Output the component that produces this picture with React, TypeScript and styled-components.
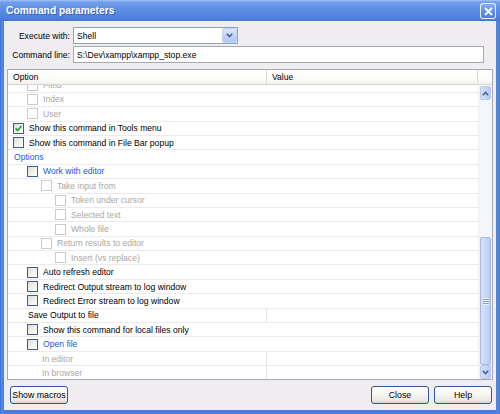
import styled, { createGlobalStyle } from "styled-components";

const GlobalStyle = createGlobalStyle`
  html, body {
    margin: 0;
    padding: 0;
    background: #ffffff;
  }
  * {
    box-sizing: border-box;
  }
`;

const FONT = `"Liberation Sans", Arial, sans-serif`;

const Window = styled.div`
  width: 500px;
  height: 414px;
  display: flex;
  flex-direction: column;
  background: linear-gradient(90deg, #3b6fd6 0, #5a8ae2 2px, #4a7cdb 4px, #4a7cdb 496px, #5a8ae2 498px, #3b6fd6 100%);
  padding: 0 4px 4px 4px;
  font-family: ${FONT};
  font-size: 8.6px;
  color: #000;
  overflow: hidden;
`;

const TitleBar = styled.div`
  height: 21px;
  margin: 0 -4px;
  padding: 0 4px 0 6px;
  display: flex;
  align-items: center;
  justify-content: space-between;
  background: linear-gradient(180deg, #a3c2f6 0, #74a0ea 2px, #5f8fe3 8px, #5283de 16px, #4577d8 21px);
`;

const TitleText = styled.span`
  color: #ffffff;
  font-weight: bold;
  font-size: 10.2px;
  letter-spacing: 0.05px;
  text-shadow: 1px 1px 0 rgba(20, 50, 130, 0.45);
`;

const CloseButton = styled.div`
  width: 16px;
  height: 16px;
  margin-top: 1px;
  border: 1px solid rgba(255, 255, 255, 0.85);
  border-radius: 3px;
  background: linear-gradient(180deg, #89aef0 0, #5d8ce4 60%, #4c7ddc 100%);
  display: flex;
  align-items: center;
  justify-content: center;
`;

const Body = styled.div`
  flex: 1;
  background: #efedf0;
  display: flex;
  flex-direction: column;
  padding: 6px 3px 6px 3px;
`;

const FormRow = styled.div`
  display: flex;
  align-items: center;
  gap: 3px;
  margin-bottom: 2px;
`;

const FormLabel = styled.label`
  width: 63px;
  text-align: right;
  white-space: nowrap;
`;

const Combo = styled.div`
  width: 165px;
  height: 17px;
  background: #ffffff;
  border: 1px solid #8aa2bd;
  display: flex;
  align-items: center;
  justify-content: space-between;
  padding-left: 3px;
`;

const ComboButton = styled.div`
  width: 15px;
  height: 15px;
  border: 1px solid #c6d4f3;
  border-radius: 2px;
  background: linear-gradient(180deg, #dce7fd 0, #c3d4fb 50%, #b2c7f4 100%);
  display: flex;
  align-items: center;
  justify-content: center;
`;

const TextBox = styled.div`
  width: 411px;
  height: 17px;
  background: #ffffff;
  border: 1px solid #a4a9b0;
  display: flex;
  align-items: center;
  padding-left: 3px;
`;

const Grid = styled.div`
  margin-top: 4px;
  height: 311px;
  border: 1px solid #a7abb0;
  background: #ffffff;
  display: flex;
  flex-direction: column;
`;

const Header = styled.div`
  height: 15px;
  display: flex;
  background: linear-gradient(180deg, #ffffff 0, #fbfbfa 70%, #f1f0ec 100%);
  border-bottom: 1px solid #d9d7cf;
`;

const HeaderCell = styled.div<{ $width?: number }>`
  ${({ $width }) => ($width ? `width: ${$width}px;` : "flex: 1;")}
  display: flex;
  align-items: center;
  padding-left: 5px;
  border-right: 1px solid #dedcd3;
`;

const HeaderFill = styled.div`
  width: 14px;
`;

const ListArea = styled.div`
  flex: 1;
  display: flex;
  min-height: 0;
`;

const Viewport = styled.div`
  flex: 1;
  overflow: hidden;
`;

const Rows = styled.div`
  margin-top: -6.6px;
`;

const Row = styled.div`
  height: 14.4px;
  display: flex;
  border-bottom: 1px solid #ebebeb;
`;

const OptionCell = styled.div<{ $indent: number; $split: boolean }>`
  width: ${({ $split }) => ($split ? "259px" : "100%")};
  display: flex;
  align-items: center;
  gap: 5px;
  padding-left: ${({ $indent }) => $indent}px;
  border-right: ${({ $split }) => ($split ? "1px solid #e6e6e6" : "none")};
  white-space: nowrap;
`;

const ValueCell = styled.div`
  flex: 1;
`;

const ItemText = styled.span<{ $tone: "normal" | "disabled" | "link" }>`
  color: ${({ $tone }) =>
    $tone === "disabled" ? "#a9a8a3" : $tone === "link" ? "#2058e0" : "#000000"};
`;

const CheckBox = styled.span<{ $disabled: boolean }>`
  width: 11px;
  height: 11px;
  flex: none;
  display: flex;
  align-items: center;
  justify-content: center;
  border: 1px solid ${({ $disabled }) => ($disabled ? "#cdcbc3" : "#3c5f8e")};
  background: ${({ $disabled }) =>
    $disabled ? "#ffffff" : "linear-gradient(135deg, #dcdcd6 0, #eeeee9 45%, #ffffff 100%)"};
`;

const ScrollBar = styled.div`
  width: 14px;
  display: flex;
  flex-direction: column;
  background: #f5f6fb;
  border-left: 1px solid #eef0f7;
  padding: 1px 1px 0 1px;
`;

const ScrollButton = styled.div`
  height: 14px;
  border: 1px solid #b9c9ee;
  border-radius: 2px;
  background: linear-gradient(90deg, #d3e0fc 0, #c3d4fb 60%, #b5c8f4 100%);
  display: flex;
  align-items: center;
  justify-content: center;
`;

const Track = styled.div`
  flex: 1;
  display: flex;
  flex-direction: column;
  justify-content: flex-end;
`;

const Thumb = styled.div`
  height: 128px;
  border: 1px solid #a9b7d8;
  border-radius: 2px;
  background: linear-gradient(90deg, #d6e2fc 0, #c6d6fb 60%, #b9cbf5 100%);
  display: flex;
  align-items: center;
  justify-content: center;
`;

const Grip = styled.div`
  width: 6px;
  height: 7px;
  background: repeating-linear-gradient(180deg, #eef3fe 0, #eef3fe 1px, #8c9fc8 1px, #8c9fc8 2px);
`;

const Footer = styled.div`
  margin-top: 6px;
  display: flex;
  align-items: center;
  padding: 0 1px 0 3px;
`;

const Spacer = styled.div`
  flex: 1;
`;

const Button = styled.div`
  width: 58px;
  height: 18px;
  margin-left: 5px;
  border: 1px solid #2c5a94;
  border-radius: 3px;
  background: linear-gradient(180deg, #ffffff 0, #f6f5f2 50%, #e9e8e2 85%, #d6d2c6 100%);
  display: flex;
  align-items: center;
  justify-content: center;
  font-size: 8.8px;
  &:first-child {
    margin-left: 0;
  }
`;

type Tone = "normal" | "disabled" | "link";

interface Item {
  label: string;
  level: number;
  check?: boolean;
  checked?: boolean;
  tone: Tone;
  split?: boolean;
}

const items: Item[] = [
  { label: "Field", level: 1, check: true, tone: "disabled" },
  { label: "Index", level: 1, check: true, tone: "disabled" },
  { label: "User", level: 1, check: true, tone: "disabled" },
  { label: "Show this command in Tools menu", level: 0, check: true, checked: true, tone: "normal" },
  { label: "Show this command in File Bar popup", level: 0, check: true, tone: "normal" },
  { label: "Options", level: 0, tone: "link" },
  { label: "Work with editor", level: 1, check: true, tone: "link" },
  { label: "Take input from", level: 2, check: true, tone: "disabled" },
  { label: "Token under cursor", level: 3, check: true, tone: "disabled" },
  { label: "Selected text", level: 3, check: true, tone: "disabled" },
  { label: "Whole file", level: 3, check: true, tone: "disabled" },
  { label: "Return results to editor", level: 2, check: true, tone: "disabled" },
  { label: "Insert (vs replace)", level: 3, check: true, tone: "disabled" },
  { label: "Auto refresh editor", level: 1, check: true, tone: "normal" },
  { label: "Redirect Output stream to log window", level: 1, check: true, tone: "normal" },
  { label: "Redirect Error stream to log window", level: 1, check: true, tone: "normal" },
  { label: "Save Output to file", level: 1, tone: "normal", split: true },
  { label: "Show this command for local files only", level: 1, check: true, tone: "normal" },
  { label: "Open file", level: 1, check: true, tone: "link" },
  { label: "In editor", level: 2, tone: "disabled", split: true },
  { label: "In browser", level: 2, tone: "disabled", split: true },
];

const Chevron = ({ up = false }: { up?: boolean }) => (
  <svg width="7" height="5" viewBox="0 0 7 5">
    <path
      d={up ? "M0.8 4.2 L3.5 1.4 L6.2 4.2" : "M0.8 0.8 L3.5 3.6 L6.2 0.8"}
      fill="none"
      stroke="#4d6185"
      strokeWidth="1.6"
    />
  </svg>
);

const CheckMark = () => (
  <svg width="7" height="7" viewBox="0 0 7 7">
    <path d="M0.6 3.4 L2.6 5.6 L6.4 1" fill="none" stroke="#21a121" strokeWidth="1.6" />
  </svg>
);

const App = () => {
  return (
    <>
      <GlobalStyle />
      <Window>
        <TitleBar>
          <TitleText>Command parameters</TitleText>
          <CloseButton>
            <svg width="9" height="9" viewBox="0 0 9 9">
              <path d="M1 1 L8 8 M8 1 L1 8" stroke="#ffffff" strokeWidth="1.8" />
            </svg>
          </CloseButton>
        </TitleBar>
        <Body>
          <FormRow>
            <FormLabel>Execute with:</FormLabel>
            <Combo>
              <span>Shell</span>
              <ComboButton>
                <Chevron />
              </ComboButton>
            </Combo>
          </FormRow>
          <FormRow>
            <FormLabel>Command line:</FormLabel>
            <TextBox>S:\Dev\xampp\xampp_stop.exe</TextBox>
          </FormRow>
          <Grid>
            <Header>
              <HeaderCell $width={259}>Option</HeaderCell>
              <HeaderCell>Value</HeaderCell>
              <HeaderFill />
            </Header>
            <ListArea>
              <Viewport>
                <Rows>
                  {items.map((item) => (
                    <Row key={item.label}>
                      <OptionCell
                        $indent={(item.check ? 5 : 6) + item.level * 14}
                        $split={!!item.split}
                      >
                        {item.check && (
                          <CheckBox $disabled={item.tone === "disabled"}>
                            {item.checked && <CheckMark />}
                          </CheckBox>
                        )}
                        <ItemText $tone={item.tone}>{item.label}</ItemText>
                      </OptionCell>
                      {item.split && <ValueCell />}
                    </Row>
                  ))}
                </Rows>
              </Viewport>
              <ScrollBar>
                <ScrollButton>
                  <Chevron up />
                </ScrollButton>
                <Track>
                  <Thumb>
                    <Grip />
                  </Thumb>
                </Track>
                <ScrollButton>
                  <Chevron />
                </ScrollButton>
              </ScrollBar>
            </ListArea>
          </Grid>
          <Footer>
            <Button>Show macros</Button>
            <Spacer />
            <Button>Close</Button>
            <Button>Help</Button>
          </Footer>
        </Body>
      </Window>
    </>
  );
};

export default App;
